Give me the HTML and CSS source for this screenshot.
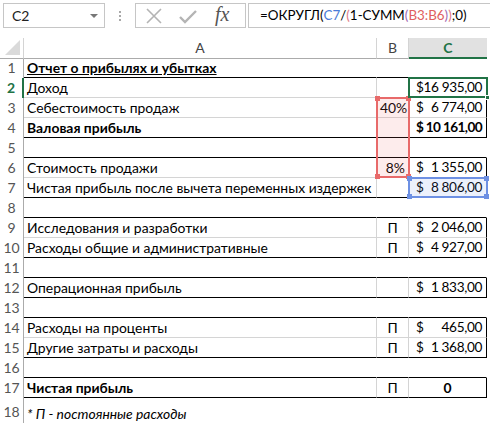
FILE: index.html
```html
<!DOCTYPE html>
<html>
  <head>
    <meta charset="utf-8">
    <title>Отчет о прибылях и убытках</title>
    <link rel="stylesheet" href="styles.css">
  </head>
  <body>
    <div class="toolbar">
      <div class="namebox">
        <span>C2</span>
        <span class="caret"></span>
      </div>
      <div class="grip"><i></i><i></i><i></i></div>
      <div class="fxbox">
        <svg class="ico" width="18" height="18" viewBox="0 0 18 18">
          <path d="M2 2 L16 16 M16 2 L2 16" stroke="#b4b4b4" stroke-width="1.6" fill="none"/>
        </svg>
        <svg class="ico" width="18" height="18" viewBox="0 0 18 18">
          <path d="M1 10 L6 15 L17 4" stroke="#b4b4b4" stroke-width="2.4" fill="none"/>
        </svg>
        <span class="fx">fx</span>
      </div>
      <div class="formula">=ОКРУГЛ(<span class="r-blue">C7</span>/<span class="p-pink">(</span>1-СУММ<span class="p-violet">(</span><span class="r-red">B3:B6</span><span class="p-violet">)</span><span class="p-pink">)</span>;0)</div>
    </div>

    <div class="sheet">
      <div class="row head">
        <div class="corner"></div>
        <div class="col">A</div>
        <div class="col">B</div>
        <div class="col sel">C</div>
      </div>

      <div class="row line-k">
        <div class="rh">1</div>
        <div class="c title">Отчет о прибылях и убытках</div>
        <div class="c"></div>
        <div class="c"></div>
      </div>
      <div class="row grp line-g">
        <div class="rh on">2</div>
        <div class="c">Доход</div>
        <div class="c"></div>
        <div class="c money"><span>$</span><span>16 935,00</span></div>
      </div>
      <div class="row grp line-g">
        <div class="rh">3</div>
        <div class="c">Себестоимость продаж</div>
        <div class="c num">40%</div>
        <div class="c money"><span>$</span><span>6 774,00</span></div>
      </div>
      <div class="row grp line-k">
        <div class="rh">4</div>
        <div class="c bold">Валовая прибыль</div>
        <div class="c"></div>
        <div class="c money bold"><span>$</span><span>10 161,00</span></div>
      </div>
      <div class="row line-k">
        <div class="rh">5</div>
        <div class="c"></div>
        <div class="c"></div>
        <div class="c"></div>
      </div>
      <div class="row grp line-g">
        <div class="rh">6</div>
        <div class="c">Стоимость продажи</div>
        <div class="c num">8%</div>
        <div class="c money"><span>$</span><span>1 355,00</span></div>
      </div>
      <div class="row grp line-k">
        <div class="rh">7</div>
        <div class="c">Чистая прибыль после вычета переменных издержек</div>
        <div class="c"></div>
        <div class="c money"><span>$</span><span>8 806,00</span></div>
      </div>
      <div class="row line-k">
        <div class="rh">8</div>
        <div class="c"></div>
        <div class="c"></div>
        <div class="c"></div>
      </div>
      <div class="row grp line-g">
        <div class="rh">9</div>
        <div class="c">Исследования и разработки</div>
        <div class="c mid">П</div>
        <div class="c money"><span>$</span><span>2 046,00</span></div>
      </div>
      <div class="row grp line-k">
        <div class="rh">10</div>
        <div class="c">Расходы общие и административные</div>
        <div class="c mid">П</div>
        <div class="c money"><span>$</span><span>4 927,00</span></div>
      </div>
      <div class="row line-k">
        <div class="rh">11</div>
        <div class="c"></div>
        <div class="c"></div>
        <div class="c"></div>
      </div>
      <div class="row grp line-k">
        <div class="rh">12</div>
        <div class="c">Операционная прибыль</div>
        <div class="c"></div>
        <div class="c money"><span>$</span><span>1 833,00</span></div>
      </div>
      <div class="row line-k">
        <div class="rh">13</div>
        <div class="c"></div>
        <div class="c"></div>
        <div class="c"></div>
      </div>
      <div class="row grp line-g">
        <div class="rh">14</div>
        <div class="c">Расходы на проценты</div>
        <div class="c mid">П</div>
        <div class="c money"><span>$</span><span>465,00</span></div>
      </div>
      <div class="row grp line-k">
        <div class="rh">15</div>
        <div class="c">Другие затраты и расходы</div>
        <div class="c mid">П</div>
        <div class="c money"><span>$</span><span>1 368,00</span></div>
      </div>
      <div class="row line-k">
        <div class="rh">16</div>
        <div class="c"></div>
        <div class="c"></div>
        <div class="c"></div>
      </div>
      <div class="row grp line-k">
        <div class="rh">17</div>
        <div class="c bold">Чистая прибыль</div>
        <div class="c mid">П</div>
        <div class="c mid bold">0</div>
      </div>
      <div class="row tall">
        <div class="rh">18</div>
        <div class="c note">* П - постоянные расходы</div>
        <div class="c"></div>
        <div class="c"></div>
      </div>

      <!-- selection + formula ranges -->
      <div class="range red">
        <i class="h tl"></i><i class="h tr"></i><i class="h bl"></i><i class="h br"></i>
      </div>
      <div class="range blue">
        <i class="h tl"></i><i class="h tr"></i><i class="h bl"></i><i class="h br"></i>
      </div>
      <div class="active"><i class="fill"></i></div>
    </div>
  </body>
</html>
```

FILE: styles.css
```css
* {
  box-sizing: border-box;
}
body {
  margin: 0;
  background: #fff;
  font-family: Lato, "Open Sans", sans-serif;
  color: #000;
  width: 490px;
  overflow: hidden;
}

/* formula bar */
.toolbar {
  display: flex;
  align-items: flex-start;
  height: 38px;
  padding-top: 3px;
}
.namebox {
  margin-left: 3px;
  width: 102px;
  height: 25px;
  border: 1px solid #c6c6c6;
  display: flex;
  align-items: center;
  justify-content: space-between;
  padding: 0 6px 0 8px;
  font-size: 14px;
  color: #222;
}
.caret {
  width: 0;
  height: 0;
  border-left: 4px solid transparent;
  border-right: 4px solid transparent;
  border-top: 4px solid #777;
}
.grip {
  width: 30px;
  height: 25px;
  display: flex;
  flex-direction: column;
  align-items: center;
  justify-content: center;
  gap: 2px;
}
.grip i {
  width: 2px;
  height: 2px;
  background: #a8a8a8;
}
.fxbox {
  width: 111px;
  height: 25px;
  border: 1px solid #c6c6c6;
  display: flex;
  align-items: center;
  padding-left: 9px;
  gap: 16px;
}
.fx {
  font-family: "Liberation Serif", serif;
  font-style: italic;
  font-size: 20px;
  color: #555;
  margin-left: 2px;
  margin-top: -3px;
}
.formula {
  margin-left: 2px;
  flex: 1;
  height: 25px;
  border: 1px solid #c6c6c6;
  border-right: none;
  padding-left: 11px;
  font-size: 13.4px;
  line-height: 23px;
  white-space: nowrap;
}
.r-blue { color: #4a7bd8; }
.r-red { color: #e06060; }
.p-pink { color: #e07a86; }
.p-violet { color: #a067b0; }

/* sheet */
.sheet {
  position: relative;
}
.row {
  display: grid;
  grid-template-columns: 24px 353px 32px 78px;
  height: 20px;
}
.corner {
  position: relative;
  border-right: 1px solid #d4d4d4;
  border-bottom: 1px solid #ababab;
}
.corner:after {
  content: "";
  position: absolute;
  right: 3px;
  bottom: 3px;
  width: 0;
  height: 0;
  border-left: 15px solid transparent;
  border-bottom: 15px solid #dadada;
}
.col {
  border-right: 1px solid #d4d4d4;
  border-bottom: 1px solid #ababab;
  text-align: center;
  font-size: 14px;
  line-height: 19px;
  color: #444;
}
.col.sel {
  background: #e1e1e1;
  border-bottom: 2px solid #217346;
  color: #217346;
  font-weight: bold;
  border-right: none;
}
.rh {
  border-right: 1px solid #ababab;
  text-align: center;
  font-size: 14px;
  line-height: 20px;
  color: #555;
}
.rh.on {
  color: #217346;
  font-weight: bold;
  border-right: 2px solid #217346;
}
.c {
  font-size: 13.9px;
  line-height: 19px;
  padding: 0 3px;
  white-space: nowrap;
  overflow: visible;
  border-bottom: 1px solid transparent;
  border-right: 1px solid transparent;
}
.line-k .c { border-bottom-color: #000; }
.line-g .c { border-bottom-color: #d4d4d4; }
.grp .c { border-right-color: #d4d4d4; }
.grp .c:last-child { border-right-color: #000; }

.title {
  font-weight: bold;
  text-decoration: underline;
}
.bold { font-weight: bold; }
.num { text-align: right; }
.mid { text-align: center; }
.money {
  display: flex;
  justify-content: space-between;
  padding: 0 4px 0 7px;
  font-size: 13.6px;
  letter-spacing: -0.35px;
}
.money.bold {
  letter-spacing: -0.6px;
}
.note {
  font-style: italic;
}
.row.tall {
  height: 27px;
}
.row.tall .c,
.row.tall .rh {
  display: flex;
  align-items: flex-end;
  padding-bottom: 1px;
}
.row.tall .rh {
  justify-content: center;
  padding-bottom: 3px;
}

/* range highlights */
.range {
  position: absolute;
  border: 2px solid;
}
.range.red {
  left: 376px;
  top: 59px;
  width: 34px;
  height: 81px;
  border-color: #e86a6a;
  background: rgba(240, 100, 100, 0.12);
}
.range.blue {
  left: 408px;
  top: 139px;
  width: 80px;
  height: 21px;
  border-color: #6d90e3;
  background: rgba(100, 140, 230, 0.12);
}
.h {
  position: absolute;
  width: 5px;
  height: 5px;
}
.red .h { background: #e86a6a; }
.blue .h { background: #6d90e3; }
.h.tl { left: -3px; top: -3px; }
.h.tr { right: -3px; top: -3px; }
.h.bl { left: -3px; bottom: -3px; }
.h.br { right: -3px; bottom: -3px; }

.active {
  position: absolute;
  left: 408px;
  top: 39px;
  width: 80px;
  height: 21px;
  border: 2px solid #217346;
}
.active .fill {
  position: absolute;
  right: -4px;
  bottom: -4px;
  width: 5px;
  height: 5px;
  background: #217346;
  border: 1px solid #fff;
}
```
